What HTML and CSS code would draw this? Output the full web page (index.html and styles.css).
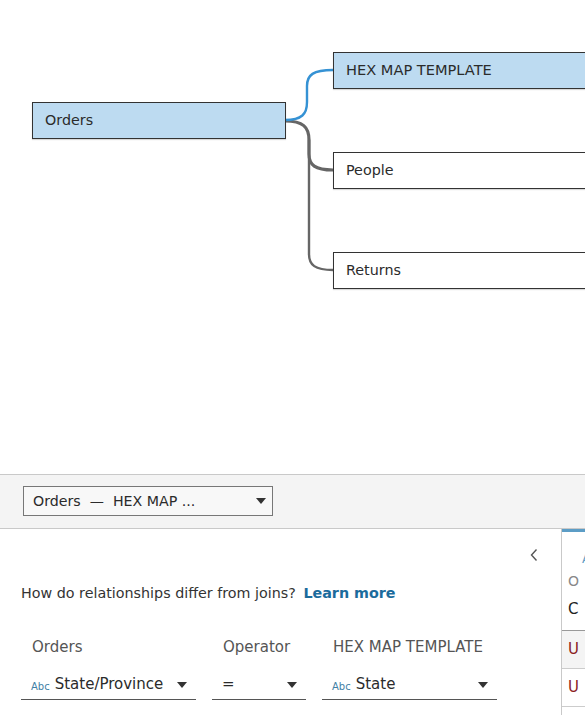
FILE: index.html
```html
<!DOCTYPE html>
<html>
<head>
<meta charset="utf-8">
<link rel="stylesheet" href="styles.css">
</head>
<body>
<div class="canvas">
  <svg class="links" width="585" height="474" viewBox="0 0 585 474">
    <path class="link gray thick" d="M285,121 C303,121 309,127 309,140 L309,154 C309,165 315,170 333,170"/>
    <path class="link gray" d="M309,140 L309,254 C309,265 315,270 333,270"/>
    <path class="link blue" d="M285,120 C302,120 307,114 307,102 L307,86 C307,75 313,70 333,70"/>
  </svg>
  <div class="node sel n-orders">Orders</div>
  <div class="node sel n-hex">HEX MAP TEMPLATE</div>
  <div class="node n-people">People</div>
  <div class="node n-returns">Returns</div>
</div>
<div class="toolbar">
  <div class="select">
    <span class="select-text">Orders&nbsp; —&nbsp; HEX MAP ...</span>
    <span class="caret"></span>
  </div>
</div>
<div class="panel">
  <div class="main">
    <div class="collapse-row">
      <svg class="chev" width="10" height="14" viewBox="0 0 10 14"><path d="M7.5,1.5 L2.5,7 L7.5,12.5" fill="none" stroke="#555" stroke-width="1.4"/></svg>
    </div>
    <p class="question">How do relationships differ from joins? <a class="learn">Learn more</a></p>
    <div class="fields">
      <div class="field f1">
        <div class="label">Orders</div>
        <div class="combo"><span class="abc">Abc</span><span class="val">State/Province</span><span class="caret"></span></div>
      </div>
      <div class="field f2">
        <div class="label">Operator</div>
        <div class="combo"><span class="val">=</span><span class="caret"></span></div>
      </div>
      <div class="field f3">
        <div class="label">HEX MAP TEMPLATE</div>
        <div class="combo"><span class="abc">Abc</span><span class="val">State</span><span class="caret"></span></div>
      </div>
    </div>
  </div>
  <div class="side">
    <div class="side-head">
      <div class="s-a">A</div>
      <div class="s-o">O</div>
      <div class="s-c">C</div>
    </div>
    <div class="s-row shade">U</div>
    <div class="s-row">U</div>
    <div class="s-row"></div>
  </div>
</div>
</body>
</html>
```

FILE: styles.css
```css
* { box-sizing: border-box; }
html, body { margin: 0; padding: 0; }
body {
  width: 585px;
  height: 715px;
  overflow: hidden;
  font-family: "DejaVu Sans", "Noto Sans", sans-serif;
  color: #2b2b2b;
  background: #fff;
}
.canvas {
  position: relative;
  height: 475px;
  border-bottom: 1px solid #c9c9c9;
  overflow: hidden;
}
.links { position: absolute; left: 0; top: 0; }
.link { fill: none; stroke-linecap: round; }
.gray { stroke: #666; stroke-width: 2.4; }
.thick { stroke-width: 3.2; }
.blue { stroke: #3592d4; stroke-width: 2.4; }
.node {
  position: absolute;
  height: 37px;
  border: 1px solid #333;
  background: #fff;
  font-size: 14.3px;
  line-height: 34px;
  padding-left: 12px;
  box-shadow: 0 1px 1px rgba(0,0,0,0.15);
}
.node.sel { background: #bddbf1; }
.n-hex { font-size: 14.6px; }
.n-orders { left: 32px; top: 102px; width: 254px; }
.n-hex { left: 333px; top: 52px; width: 260px; }
.n-people { left: 333px; top: 152px; width: 260px; }
.n-returns { left: 333px; top: 252px; width: 260px; }
.toolbar {
  height: 54px;
  background: #f4f4f4;
  border-bottom: 1px solid #c9c9c9;
  padding: 11px 0 0 23px;
}
.select {
  width: 250px;
  height: 30px;
  border: 1px solid #777;
  background: #f8f8f8;
  display: flex;
  align-items: center;
  justify-content: space-between;
  padding: 0 6px 0 9px;
  font-size: 14.2px;
}
.caret {
  width: 0; height: 0;
  border-left: 5px solid transparent;
  border-right: 5px solid transparent;
  border-top: 6px solid #333;
}
.panel {
  display: flex;
  height: 186px;
}
.main {
  width: 562px;
  border-right: 1px solid #c9c9c9;
  padding: 0 0 0 21px;
}
.collapse-row {
  display: flex;
  justify-content: flex-end;
  padding: 19px 22px 0 0;
  height: 37px;
}
.question {
  margin: 19px 0 0 0;
  font-size: 14.3px;
  color: #333;
}
.learn { color: #1b6b9c; font-weight: 700; margin-left: 3px; }
.fields { display: flex; margin-top: 37px; }
.field { display: flex; flex-direction: column; }
.f1 { width: 175px; }
.f2 { width: 94px; margin-left: 16px; }
.f3 { width: 175px; margin-left: 16px; }
.label { font-size: 15px; color: #555; padding-left: 11px; height: 20px; }
.combo {
  margin-top: 17px;
  height: 25px;
  border-bottom: 1px solid #555;
  display: flex;
  align-items: flex-start;
  padding: 0 9px 0 10px;
  font-size: 15px;
}
.combo .caret { margin-left: auto; margin-top: 7px; }
.abc { font-size: 10px; color: #3f7fa5; margin-right: 5px; margin-top: 6px; }
.val { color: #2b2b2b; }
.side { flex: 1; overflow: hidden; }
.side-head {
  height: 102px;
  border-top: 3px solid #5c9dc6;
  border-bottom: 1px solid #999;
  padding-left: 6px;
  position: relative;
  font-size: 14px;
}
.s-a { color: #5c9dc6; position: absolute; left: 20px; top: 20px; font-size: 12px; }
.s-o { color: #888; position: absolute; left: 6px; top: 41px; font-size: 14px; }
.s-c { color: #222; position: absolute; left: 6px; top: 68px; font-size: 15px; }
.s-row {
  height: 38px;
  border-bottom: 1px solid #ccc;
  padding-left: 6px;
  line-height: 37px;
  font-size: 15px;
  color: #8b1d1d;
}
.s-row.shade { background: #f4f4f4; }
```
